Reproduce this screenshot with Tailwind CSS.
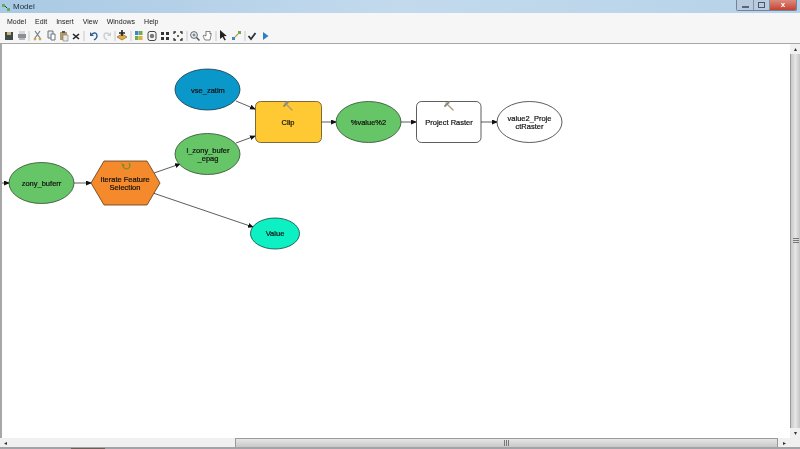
<!DOCTYPE html>
<html lang="en">
<head>
    <meta charset="UTF-8">
    <title>Model</title>
    <script src="https://cdn.jsdelivr.net/npm/@tailwindcss/browser@4"></script>
</head>
<body class="w-[800px] h-[449px] overflow-hidden flex flex-col bg-white blur-[0.35px] font-['Liberation_Sans',sans-serif] text-[#222]">

    <!-- Title bar -->
    <header class="h-[13px] shrink-0 flex items-center pl-[1px] bg-gradient-to-r from-[#a9c9e4] via-[#c3daed] to-[#b6d2e8] relative">
        <svg class="w-[10px] h-[10px]" viewBox="0 0 10 10"><path d="M1 2h3v3H1zM6 6h3v3H6z" fill="#5fae5a"/><path d="M4 4l2 2" stroke="#333"/></svg>
        <span class="ml-[2px] text-[8px] leading-none text-[#1c2b3a]">Model</span>
        <div class="absolute right-[3px] top-0 flex h-[11px] border border-t-0 border-[#6f8499] rounded-b-[2px] overflow-hidden">
            <div class="w-[16px] bg-[#b9cbdc] flex items-end justify-center pb-[2px]"><div class="w-[7px] h-[2px] bg-white border border-[#56697c]"></div></div>
            <div class="w-[16px] bg-[#b9cbdc] border-l border-[#7f93a6] flex items-center justify-center"><div class="w-[7px] h-[6px] bg-transparent border border-[#46586a]"></div></div>
            <div class="w-[27px] bg-gradient-to-b from-[#d98a7e] to-[#c63f2e] border-l border-[#7f93a6] flex items-center justify-center text-[8px] leading-none font-bold text-white">x</div>
        </div>
    </header>

    <!-- Menu -->
    <nav class="h-[15px] shrink-0 flex items-center pl-[7px] pt-[1px] gap-[9px] bg-[#f6f6f7] text-[7px] leading-none">
        <span>Model</span><span>Edit</span><span>Insert</span><span>View</span><span>Windows</span><span>Help</span>
    </nav>

    <!-- Toolbar -->
    <div class="h-[15px] shrink-0 flex items-center pl-[4px] bg-[#f6f6f7]">
        <svg class="w-[280px] h-[14px]" viewBox="0 0 280 14" fill="none">
            <!-- save, print -->
            <path d="M1 3h8v8H1z" fill="#3f4a4a"/><path d="M3 3h4v3H3z" fill="#c9b27a"/>
            <path d="M14 5h8v4h-8z" fill="#8b8f95"/><path d="M15 2h6v3h-6z" fill="#d5d7da"/><path d="M15 9h6v2h-6z" fill="#b5b7ba"/>
            <path d="M25 2v10" stroke="#c8c8c8"/>
            <!-- cut, copy, paste, delete -->
            <path d="M31 2l5 7M36 2l-5 7" stroke="#6b7f86" stroke-width="1.2"/><circle cx="31" cy="10" r="1.4" fill="#d2a25a"/><circle cx="36" cy="10" r="1.4" fill="#d2a25a"/>
            <path d="M44 2h5v7h-5z" fill="#e8ecef" stroke="#69747c"/><path d="M47 5h4v6h-4z" fill="#fff" stroke="#69747c"/>
            <path d="M56 3h7v8h-7z" fill="#b59a66"/><path d="M58 2h3v2h-3z" fill="#555"/><path d="M59 6h5v6h-5z" fill="#e8e8e8" stroke="#777" stroke-width=".6"/>
            <path d="M69 5l6 5M75 5l-6 5" stroke="#222" stroke-width="1.6"/>
            <path d="M80 2v10" stroke="#c8c8c8"/>
            <!-- undo, redo -->
            <path d="M88 5c3-2 5-1 5 2s-2 3-3 4" stroke="#2d5f96" stroke-width="1.4"/><path d="M86 3v4h4z" fill="#2d5f96"/>
            <path d="M105 5c-3-2-5-1-5 2s2 3 3 4" stroke="#c9ccd0" stroke-width="1.4"/><path d="M107 3v4h-4z" fill="#c9ccd0"/>
            <path d="M111 2v10" stroke="#c8c8c8"/>
            <!-- add data -->
            <path d="M113 8l5-3 5 3-5 3z" fill="#e3ae3e" stroke="#7a5a1c" stroke-width=".6"/><path d="M118 1v6M115 4h6" stroke="#222" stroke-width="1.6"/>
            <path d="M127 2v10" stroke="#c8c8c8"/>
            <!-- auto layout, extents -->
            <path d="M131 2h3.500v4H131z" fill="#3d86c6"/><path d="M135 2h3.500v4H135z" fill="#6cae4a"/><path d="M131 7h3.500v4H131z" fill="#6cae4a"/><path d="M135 7h3.500v4H135z" fill="#e3ae3e"/>
            <rect x="144" y="2.500" width="8" height="9" rx="2" stroke="#444"/><circle cx="148" cy="7" r="2.200" fill="#777"/>
            <path d="M157 3h3v3h-3zM162 3h3v3h-3zM157 8h3v3h-3zM162 8h3v3h-3z" fill="#333"/>
            <path d="M170 5V3h2M176 3h2v2M170 9v2h2M178 9v2h-2" stroke="#333" stroke-width="1.300"/><path d="M173 6h2v2h-2z" fill="#666"/>
            <path d="M183 2v10" stroke="#c8c8c8"/>
            <!-- zoom, pan -->
            <circle cx="190" cy="6" r="3.400" stroke="#667" fill="#e6eef4"/><path d="M192.500 8.500l3 3" stroke="#555" stroke-width="1.500"/><path d="M188.500 6h3M190 4.500v3" stroke="#444" stroke-width=".7"/>
            <path d="M199 7l2 4h5l1-5v-2l-1 1v-3l-1 1-1-1-1 1-1-1v5l-2-1z" fill="#fff" stroke="#666" stroke-width=".8"/>
            <path d="M212 2v10" stroke="#c8c8c8"/>
            <!-- select, connect -->
            <path d="M216 1v9l2.500-2 2 3.500 1.300-.8-2-3.400 3-.3z" fill="#222"/>
            <path d="M228 11h3V8h-3z" fill="#3d86c6"/><path d="M234 5h3V2h-3z" fill="#6cae4a"/><path d="M231 8l3-3" stroke="#d19a35" stroke-width="1.200"/>
            <path d="M241 2v10" stroke="#c8c8c8"/>
            <!-- validate, run -->
            <path d="M244.500 7l2.500 3 4.500-6" stroke="#2b3238" stroke-width="1.800"/>
            <path d="M259 3v8l5.500-4z" fill="#2f7fc5"/>
        </svg>
    </div>

    <!-- Canvas row -->
    <div class="flex-1 min-h-0 flex">
        <main class="flex-1 border-l-[2px] border-t border-[#a7a7a7] bg-white">
            <svg class="w-[788px] h-[394px] block" viewBox="2 44 788 394">
                <defs>
                    <marker id="head" markerWidth="6" markerHeight="6" refX="5" refY="2.500" orient="auto" markerUnits="userSpaceOnUse">
                        <path d="M0 0L6 2.500L0 5z" fill="#111"/>
                    </marker>
                </defs>

                <g stroke="#333" stroke-width=".8">
                    <path d="M0 183H9" marker-end="url(#head)"/>
                    <path d="M74 183H91" marker-end="url(#head)"/>
                    <path d="M154 173L180 164" marker-end="url(#head)"/>
                    <path d="M153 193L253 227" marker-end="url(#head)"/>
                    <path d="M236 101L255 109" marker-end="url(#head)"/>
                    <path d="M236 143L255 136" marker-end="url(#head)"/>
                    <path d="M321 122H336" marker-end="url(#head)"/>
                    <path d="M401 122H416" marker-end="url(#head)"/>
                    <path d="M481 122H497" marker-end="url(#head)"/>
                </g>

                <g stroke="#2f4a2f" stroke-width=".8">
                    <ellipse cx="41.500" cy="183" rx="32.500" ry="20.500" fill="#66c566"/>
                    <path d="M91 183L104 161H147L160 183L147 205H104z" fill="#f58a2c" stroke="#5a3a16"/>
                    <ellipse cx="207.500" cy="154" rx="32.500" ry="20.500" fill="#66c566"/>
                    <ellipse cx="207.500" cy="89.500" rx="32.500" ry="20.500" fill="#0a97c9" stroke="#12364a"/>
                    <rect x="255.500" y="101.500" width="66" height="41" rx="5" fill="#ffc933" stroke="#5a4a1a"/>
                    <ellipse cx="275" cy="233.500" rx="24.500" ry="15.500" fill="#0cf0c4" stroke="#12453c"/>
                    <ellipse cx="368.500" cy="122" rx="32.500" ry="20.500" fill="#66c566"/>
                    <rect x="416.500" y="101.500" width="64.500" height="41" rx="5" fill="#fff" stroke="#333"/>
                    <ellipse cx="529.500" cy="122" rx="32.500" ry="20.500" fill="#fff" stroke="#333"/>
                </g>

                <!-- tool hammers -->
                <g stroke-linecap="round">
                    <path d="M285 103l7 7" stroke="#a89a78" stroke-width="1.300"/><path d="M284 106l4-4" stroke="#8a8a80" stroke-width="1.800"/>
                    <path d="M446 103l7 7" stroke="#a89a78" stroke-width="1.300"/><path d="M445 106l4-4" stroke="#8a8a80" stroke-width="1.800"/>
                </g>
                <!-- iterator loop -->
                <path d="M129 163a3.500 3.500 0 1 1-6 3" fill="none" stroke="#6f8f2a" stroke-width="1.300"/><path d="M121 163l2 4 2-2z" fill="#6f8f2a"/>

                <g class="text-[7.500px] fill-[#111] stroke-[#111] stroke-[0.2px]" text-anchor="middle">
                    <text x="41.500" y="186">zony_buferr</text>
                    <text x="125" y="182">Iterate Feature</text>
                    <text x="125" y="190">Selection</text>
                    <text x="208" y="153">l_zony_bufer</text>
                    <text x="208" y="161">_epag</text>
                    <text x="208" y="93">vse_zatim</text>
                    <text x="288" y="125">Clip</text>
                    <text x="275" y="236">Value</text>
                    <text x="368.500" y="125">%value%2</text>
                    <text x="449" y="125">Project Raster</text>
                    <text x="529.500" y="121">value2_Proje</text>
                    <text x="529.500" y="129">ctRaster</text>
                </g>
            </svg>
        </main>

        <!-- Vertical scrollbar -->
        <div class="w-[10px] flex flex-col bg-[#f0f0f0] border-t border-[#a7a7a7]">
            <div class="h-[10px] flex items-center justify-center text-[6px] leading-none text-[#333]">▴</div>
            <div class="flex-1 flex items-center justify-center bg-gradient-to-r from-[#c9c9c9] via-[#e6e6e6] to-[#c4c4c4] border-l border-[#9a9a9a]">
                <div class="w-[6px] h-[6px] bg-[repeating-linear-gradient(180deg,#777_0_1px,transparent_1px_2px)]"></div>
            </div>
            <div class="h-[10px] flex items-center justify-center text-[6px] leading-none text-[#333]">▾</div>
        </div>
    </div>

    <!-- Horizontal scrollbar -->
    <div class="h-[9px] shrink-0 flex bg-[#f0f0f0]">
        <div class="w-[10px] flex items-center justify-center text-[6px] leading-none text-[#333]">◂</div>
        <div class="w-[225px]"></div>
        <div class="w-[543px] flex items-center justify-center bg-gradient-to-b from-[#e6e6e6] to-[#c8c8c8] border-x border-t border-[#9a9a9a]">
            <div class="w-[6px] h-[6px] bg-[repeating-linear-gradient(90deg,#777_0_1px,transparent_1px_2px)]"></div>
        </div>
        <div class="w-[12px] flex items-center justify-center text-[6px] leading-none text-[#333]">▸</div>
        <div class="flex-1"></div>
    </div>

    <!-- Window frame edge -->
    <div class="h-[2px] shrink-0 flex bg-[#a0a4a8]">
        <div class="ml-[71px] w-[34px] h-[1px] mt-[1px] bg-[#6a6058]"></div>
    </div>
</body>
</html>
